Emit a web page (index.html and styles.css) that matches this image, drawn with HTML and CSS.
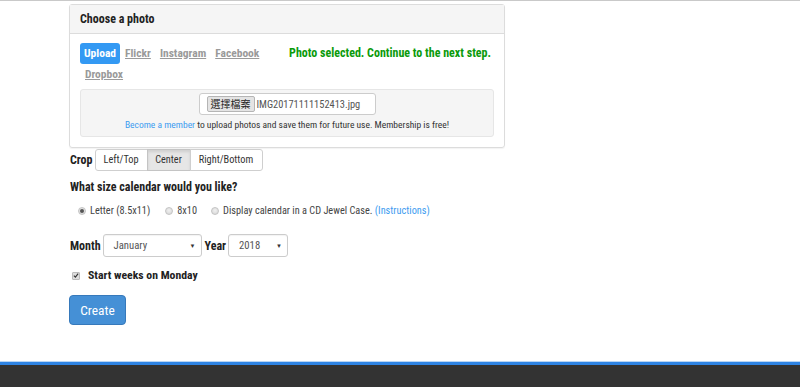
FILE: index.html
```html
<!DOCTYPE html>
<html>
<head>
<meta charset="utf-8">
<link rel="stylesheet" href="styles.css">
</head>
<body>
<div class="topline"></div>
<main class="page">
  <section class="panel">
    <div class="panel-head">Choose a photo</div>
    <div class="panel-body">
      <div class="tabrow">
        <nav class="tabs">
          <a class="tab active">Upload</a><a class="tab">Flickr</a><a class="tab">Instagram</a><a class="tab">Facebook</a><a class="tab">Dropbox</a>
        </nav>
        <div class="status">Photo selected. Continue to the next step.</div>
      </div>
      <div class="well">
        <div class="file"><span class="file-btn">選擇檔案</span><span class="file-name">IMG20171111152413.jpg</span></div>
        <p class="note"><a class="link">Become a member</a> to upload photos and save them for future use. Membership is free!</p>
      </div>
    </div>
  </section>

  <div class="crop">
    <span class="label">Crop</span>
    <div class="btn-group">
      <span class="gbtn">Left/Top</span><span class="gbtn on">Center</span><span class="gbtn">Right/Bottom</span>
    </div>
  </div>

  <h3 class="question">What size calendar would you like?</h3>
  <div class="radios">
    <label class="opt"><span class="radio checked"></span>Letter (8.5x11)</label>
    <label class="opt"><span class="radio"></span>8x10</label>
    <label class="opt"><span class="radio"></span>Display calendar in a CD Jewel Case.&nbsp;<a class="link">(Instructions)</a></label>
  </div>

  <div class="daterow">
    <span class="label">Month</span>
    <span class="select month">January<span class="caret">▼</span></span>
    <span class="label">Year</span>
    <span class="select year">2018<span class="caret">▼</span></span>
  </div>

  <label class="check"><span class="box"><svg width="7" height="7" viewBox="0 0 7 7"><path d="M1 3.6 L2.8 5.4 L6 1.4" fill="none" stroke="#333" stroke-width="1.3"/></svg></span>Start weeks on Monday</label>

  <button class="create">Create</button>
</main>
<footer class="footer"></footer>
</body>
</html>
```
FILE: styles.css
```css
* { box-sizing: border-box; }
html, body { margin: 0; padding: 0; }
body {
  font-family: Roboto, "Liberation Sans", "Noto Sans CJK TC", sans-serif;
  font-stretch: 75%;
  color: #333;
  background: #fff;
  height: 387px;
  overflow: hidden;
}
.topline { height: 1px; background: #c9c9c9; }
.page { width: 436px; margin-left: 69px; padding-top: 3px; height: 361px; }

.panel {
  border: 1px solid #dcdcdc;
  border-radius: 3px;
  box-shadow: 0 1px 1px rgba(0,0,0,0.05);
}
.panel-head {
  height: 29px;
  background: #f5f5f5;
  border-bottom: 1px solid #dcdcdc;
  font-size: 12px;
  font-weight: 700;
  line-height: 28px;
  padding-left: 10px;
  color: #222;
}
.panel-body { padding: 9px 10px 10px 10px; }
.tabrow { display: flex; }
.tabs { width: 206px; line-height: 21px; font-size: 11.5px; font-weight: 700; }
.tab {
  display: inline-block;
  padding: 0 4px;
  color: #9a9a9a;
  text-decoration: underline;
  border-radius: 3px;
  line-height: 21px;
  height: 21px;
  margin-right: 1px;
}
.tab:last-child { padding-left: 5px; }
.tab.active { background: #3399f3; color: #fff; text-decoration: none; }
.status {
  flex: 1;
  text-align: right;
  color: #0a9a0a;
  font-size: 12px;
  font-weight: 700;
  line-height: 21px;
  padding-right: 3px;
  white-space: nowrap;
}
.well {
  margin-top: 4px;
  background: #f5f5f5;
  border: 1px solid #e6e6e6;
  border-radius: 3px;
  padding: 3px 0 5px;
  text-align: center;
}
.file {
  display: inline-flex;
  align-items: center;
  width: 177px;
  height: 22px;
  background: #fff;
  border: 1px solid #ccc;
  border-radius: 3px;
  padding-left: 7px;
  font-size: 10.4px;
  color: #555;
  white-space: nowrap;
}
.file-btn {
  font-family: "Noto Sans CJK TC", sans-serif;
  font-stretch: normal;
  background: #e4e4e4;
  border: 1px solid #b5b5b5;
  border-radius: 2px;
  height: 16px;
  width: 48px;
  line-height: 14px;
  font-size: 10px;
  color: #222;
  margin-right: 2px;
  text-align: center;
}
.note { margin: 4px 0 0; font-size: 9.5px; line-height: 12px; color: #333; }
.link { color: #3d9cf0; }

.crop { display: flex; align-items: center; padding-top: 1px; }
.label { font-size: 12px; font-weight: 700; color: #222; }
.crop .label { margin-left: 1px; margin-right: 2px; }
.btn-group { display: flex; }
.gbtn {
  height: 22px;
  line-height: 20px;
  border: 1px solid #cfcfcf;
  margin-left: -1px;
  font-size: 10.3px;
  color: #333;
  background: #fff;
  text-align: center;
}
.gbtn:first-child { border-radius: 3px 0 0 3px; margin-left: 0; width: 53px; }
.gbtn.on { background: #e6e6e6; border-color: #c4c4c4; box-shadow: inset 0 2px 3px rgba(0,0,0,0.1); width: 44px; }
.gbtn:last-child { border-radius: 0 3px 3px 0; width: 73px; }

.question { margin: 8px 0 0 1px; font-size: 12px; font-weight: 700; color: #222; line-height: 17px; }
.radios { display: flex; margin: 8px 0 0 9px; font-size: 10.3px; color: #444; line-height: 14px; }
.opt { display: inline-flex; align-items: center; }
.opt:nth-child(1) { margin-right: 15px; }
.opt:nth-child(2) { margin-right: 14px; }
.radio {
  width: 8px; height: 8px; border-radius: 50%;
  background: radial-gradient(circle at 50% 40%, #f0f0f0, #d4d4d4);
  border: 1px solid #c4c4c4;
  margin-right: 4px; position: relative;
}
.radio.checked::after {
  content: ""; position: absolute; left: 1px; top: 1px; width: 4px; height: 4px; border-radius: 50%; background: #555;
}

.daterow { display: flex; align-items: center; margin-top: 16px; }
.daterow .label { margin-left: 1px; }
.select {
  position: relative;
  height: 23px;
  border: 1px solid #ccc;
  border-radius: 3px;
  background: #fff;
  font-size: 10.7px;
  color: #555;
  line-height: 21px;
  padding-left: 10px;
  margin: 0 2px;
  box-shadow: inset 0 1px 1px rgba(0,0,0,0.05);
}
.select.month { width: 99px; }
.select.year { width: 60px; }
.caret { position: absolute; right: 5px; top: 0; font-size: 6px; color: #333; }

.check { display: flex; align-items: center; margin: 10px 0 0 3px; font-size: 11.75px; font-weight: 700; color: #222; line-height: 17px; }
.box {
  width: 8px; height: 8px; background: #ddd; border: 1px solid #bbb; border-radius: 1px;
  margin-right: 8px; display: inline-flex; align-items: center; justify-content: center;
}
.create {
  display: block;
  margin-top: 11px;
  width: 57px; height: 30px;
  background: #4590d6;
  border: 1px solid #3679bb;
  border-radius: 4px;
  color: #fff;
  font-family: Roboto, "Liberation Sans", sans-serif;
  font-stretch: 75%;
  font-size: 13.4px;
  padding: 0;
}
.footer {
  height: 26px;
  background: #333;
  border-top: 3px solid #2f84e4;
  box-shadow: 0 -1px 0 #b9d6f4;
}
```
